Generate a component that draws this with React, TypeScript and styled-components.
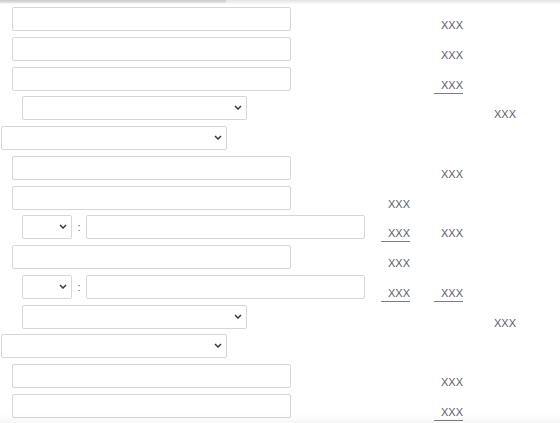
import styled, { createGlobalStyle } from "styled-components";

type Field = "input" | "wide" | "shifted" | "pair";
interface Cell { text: string; ruled?: boolean }
interface LineData {
    field: Field;
    b?: Cell;
    a?: Cell;
    c?: Cell;
}

// one entry per line of the form
const lines: LineData[] = [
    { field: "input", a: { text: "XXX" } },
    { field: "input", a: { text: "XXX" } },
    { field: "input", a: { text: "XXX", ruled: true } },
    { field: "wide", c: { text: "XXX" } },
    { field: "shifted" },
    { field: "input", a: { text: "XXX" } },
    { field: "input", b: { text: "XXX" } },
    { field: "pair", b: { text: "XXX", ruled: true }, a: { text: "XXX" } },
    { field: "input", b: { text: "XXX" } },
    { field: "pair", b: { text: "XXX", ruled: true }, a: { text: "XXX", ruled: true } },
    { field: "wide", c: { text: "XXX" } },
    { field: "shifted" },
    { field: "input", a: { text: "XXX" } },
    { field: "input", a: { text: "XXX", ruled: true } },
];

const GlobalStyle = createGlobalStyle`
    html, body {
        margin: 0;
        padding: 0;
        background: #fff;
        font-family: "Liberation Sans", Arial, sans-serif;
    }
`;

function Chevron() {
    return <svg width="8" height="5" viewBox="0 0 8 5">
        <path d="M1 1l3 3 3-3" fill="none" stroke="#3a3a3a" strokeWidth="1.5" />
    </svg>
};

function Dropdown({ width, offset }: { width: number, offset: number }) {
    return <SelectWrap $width={width} $offset={offset}>
        <Select><option></option></Select>
        <Arrow><Chevron /></Arrow>
    </SelectWrap>
};

function FieldCell({ field }: { field: Field }) {
    if (field === "input") return <TextBox $offset={12} />;
    if (field === "wide") return <Dropdown width={225} offset={22} />;
    if (field === "shifted") return <Dropdown width={226} offset={1} />;
    return <Pair>
        <Dropdown width={50} offset={22} />
        <Colon>:</Colon>
        <TextBox $offset={0} />
    </Pair>
};

function Value({ cell }: { cell?: Cell }) {
    if (!cell) return <span />;
    return <Amount $ruled={!!cell.ruled}>{cell.text}</Amount>
};

export default function App() {
    return <Page>
        <GlobalStyle />
        <TopShade><TopTab /></TopShade>
        <Form>
            {lines.map((line, i) => <Line key={i}>
                <FieldCell field={line.field} />
                <Value cell={line.b} />
                <Value cell={line.a} />
                <Value cell={line.c} />
            </Line>)}
        </Form>
        <BottomFade />
    </Page>
};

const Page = styled.div`
    width: 560px;
    height: 423px;
    overflow: hidden;
    position: relative;
`;

const TopShade = styled.div`
    height: 5px;
    background: linear-gradient(#e2e2e2, #fbfbfb 80%, #fff);
    position: absolute;
    top: 0;
    left: 0;
    right: 0;
`;

const TopTab = styled.div`
    width: 226px;
    height: 3px;
    background: linear-gradient(#c9c9c9, #e6e6e6);
`;

const BottomFade = styled.div`
    position: absolute;
    left: 0;
    right: 0;
    bottom: 0;
    height: 10px;
    background: linear-gradient(rgba(0, 0, 0, 0), rgba(0, 0, 0, 0.035));
`;

const Form = styled.div`
    padding-top: 7px;
`;

const Line = styled.div`
    display: grid;
    grid-template-columns: 381px repeat(3, 53px);
    height: 29.75px;
    align-items: start;
`;

const TextBox = styled.input.attrs({ type: "text" })<{ $offset: number }>`
    box-sizing: border-box;
    width: 279px;
    height: 24px;
    margin: 0 0 0 ${p => p.$offset}px;
    border: 1px solid #d6d6d6;
    border-radius: 2px;
    background: #fff;
    outline: none;
`;

const SelectWrap = styled.div<{ $width: number, $offset: number }>`
    position: relative;
    width: ${p => p.$width}px;
    height: 24px;
    margin-left: ${p => p.$offset}px;
`;

const Select = styled.select`
    appearance: none;
    box-sizing: border-box;
    width: 100%;
    height: 100%;
    margin: 0;
    border: 1px solid #d6d6d6;
    border-radius: 2px;
    background: #fff;
    outline: none;
`;

const Arrow = styled.span`
    position: absolute;
    right: 5px;
    top: 9px;
    line-height: 0;
    pointer-events: none;
`;

const Pair = styled.div`
    display: flex;
    align-items: center;
`;

const Colon = styled.span`
    width: 14px;
    text-align: center;
    font-size: 11px;
    color: #555;
`;

const Amount = styled.span<{ $ruled: boolean }>`
    box-sizing: border-box;
    width: 29px;
    margin-top: 12px;
    padding-bottom: 2px;
    text-align: right;
    font-size: 11px;
    line-height: 12px;
    color: #5b6068;
    border-bottom: 1px solid ${p => p.$ruled ? "#7a7f86" : "transparent"};
`;
